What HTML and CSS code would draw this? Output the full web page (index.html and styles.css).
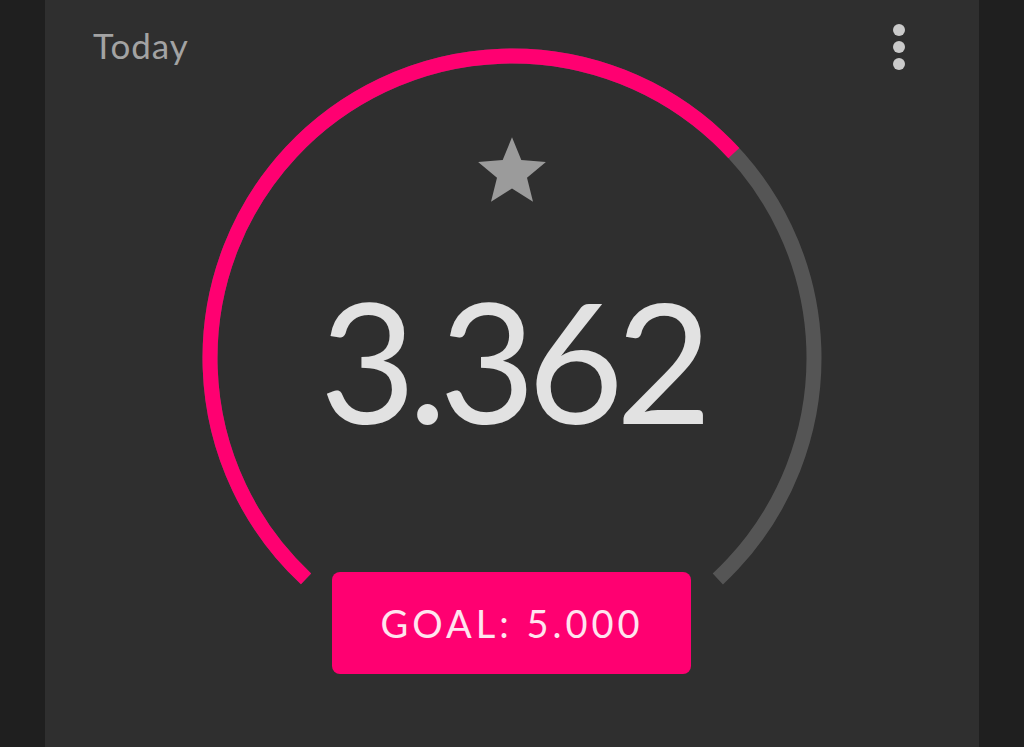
FILE: index.html
```html
<!DOCTYPE html>
<html lang="en">
<head>
    <meta charset="UTF-8">
    <meta name="viewport" content="width=device-width, initial-scale=1.0">
    <title>Steps Today</title>
    <link rel="stylesheet" href="styles.css">
</head>
<body>
    <div class="card">
        <div class="header">
            <span class="title">Today</span>
            <div class="menu">
                <span class="dot"></span>
                <span class="dot"></span>
                <span class="dot"></span>
            </div>
        </div>

        <div class="gauge">
            <svg class="ring" width="640" height="640" viewBox="0 0 640 640">
                <!-- track, 274 degrees with gap at the bottom -->
                <circle cx="320" cy="320" r="302" fill="none" stroke="#555555" stroke-width="15"
                        stroke-dasharray="1443.9 1897.5" transform="rotate(133 320 320)"/>
                <!-- progress 3362 / 5000 -->
                <circle cx="320" cy="320" r="302" fill="none" stroke="#ff0071" stroke-width="15"
                        stroke-dasharray="970.9 1897.5" transform="rotate(133 320 320)"/>
            </svg>
            <div class="gauge-body">
                <svg class="star" width="72" height="70" viewBox="0 0 24 23">
                    <path d="M12 0.6l3.1 7.6 8.2 0.6-6.3 5.3 2 8-7-4.4-7 4.4 2-8L0.7 8.8l8.2-0.6z" fill="#9b9b9b"/>
                </svg>
                <div class="steps">3.362</div>
                <button class="goal">GOAL: 5.000</button>
            </div>
        </div>
    </div>
</body>
</html>
```

FILE: styles.css
```css
body {
    margin: 0;
    background-color: #1f1f1f;
    font-family: Lato, "Open Sans", sans-serif;
}
.card {
    display: grid;
    margin: 0 45px;
    height: 747px;
    background-color: #2f2f2f;
    overflow: hidden;
}
.header, .gauge {
    grid-area: 1 / 1;
}
.header {
    display: flex;
    justify-content: space-between;
    align-items: flex-start;
    padding: 24px 74px 0 48px;
    z-index: 1;
}
.title {
    font-size: 35px;
    letter-spacing: 1px;
    color: #a3a3a3;
}
.menu {
    display: flex;
    flex-direction: column;
    gap: 5px;
}
.dot {
    width: 12px;
    height: 12px;
    border-radius: 50%;
    background-color: #cacaca;
}
.gauge {
    display: grid;
    justify-items: center;
    width: 640px;
    margin: 38px auto 0;
    align-self: start;
}
.ring, .gauge-body {
    grid-area: 1 / 1;
}
.gauge-body {
    display: flex;
    flex-direction: column;
    align-items: center;
    padding-top: 97px;
}
.steps {
    margin-top: 72px;
    font-size: 166px;
    line-height: 1;
    letter-spacing: -8px;
    color: #e2e2e2;
}
.goal {
    margin-top: 129px;
    width: 359px;
    height: 102px;
    border: none;
    border-radius: 8px;
    background-color: #ff0071;
    color: #ffe4ef;
    font-family: Lato, "Open Sans", sans-serif;
    font-size: 38px;
    letter-spacing: 4px;
    cursor: pointer;
}
```
